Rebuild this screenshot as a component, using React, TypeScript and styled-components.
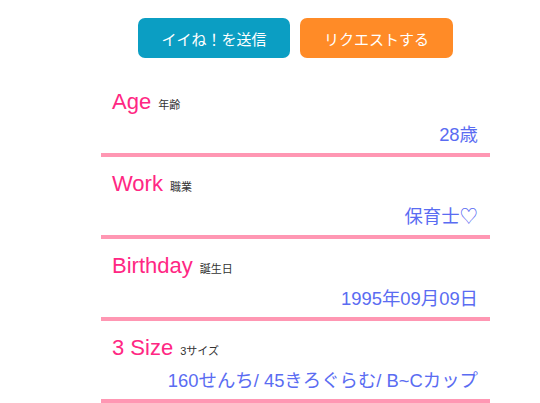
import React from "react";
import styled, { createGlobalStyle } from "styled-components";

const Global = createGlobalStyle`
  html, body { margin: 0; padding: 0; background: #fff; }
  body { font-family: "Liberation Sans", "Noto Sans CJK JP", sans-serif; }
`;

const Page = styled.div`
  width: 389px;
  margin-left: 101px;
  padding-top: 18px;
`;

const Buttons = styled.div`
  display: flex;
  justify-content: center;
  gap: 10px;
  margin-bottom: 17px;
`;

const Button = styled.button<{ $tone: "blue" | "orange" }>`
  width: ${(p) => (p.$tone === "blue" ? 152 : 153)}px;
  height: 40px;
  border: none;
  border-radius: 7px;
  background: ${(p) => (p.$tone === "blue" ? "#0b9ec3" : "#ff8b27")};
  color: #fff;
  font-family: "Liberation Sans", "Noto Sans CJK JP", sans-serif;
  font-size: 15px;
  padding: 0;
  cursor: pointer;
`;

const Row = styled.div`
  border-bottom: 4px solid #ff97b3;
  padding: 15px 12px 7px 11px;
`;

const Title = styled.div`
  display: flex;
  align-items: baseline;
  gap: 7px;
  height: 23px;
  line-height: 23px;
`;

const TitleMain = styled.span`
  color: #ff2783;
  font-size: 22px;
`;

const TitleSub = styled.span`
  color: #333;
  font-size: 11px;
`;

const Value = styled.div`
  text-align: right;
  color: #5a6cf2;
  font-size: 18.4px;
  height: 22px;
  line-height: 22px;
  margin-top: 11px;
  white-space: nowrap;
`;

const items = [
  { en: "Age", ja: "年齢", value: "28歳" },
  { en: "Work", ja: "職業", value: "保育士♡" },
  { en: "Birthday", ja: "誕生日", value: "1995年09月09日" },
  { en: "3 Size", ja: "3サイズ", value: "160せんち/ 45きろぐらむ/ B~Cカップ" },
];

export default function App() {
  return (
    <>
      <Global />
      <Page>
        <Buttons>
          <Button $tone="blue">イイね！を送信</Button>
          <Button $tone="orange">リクエストする</Button>
        </Buttons>
        {items.map((it) => (
          <Row key={it.en}>
            <Title>
              <TitleMain>{it.en}</TitleMain>
              <TitleSub>{it.ja}</TitleSub>
            </Title>
            <Value>{it.value}</Value>
          </Row>
        ))}
      </Page>
    </>
  );
}
